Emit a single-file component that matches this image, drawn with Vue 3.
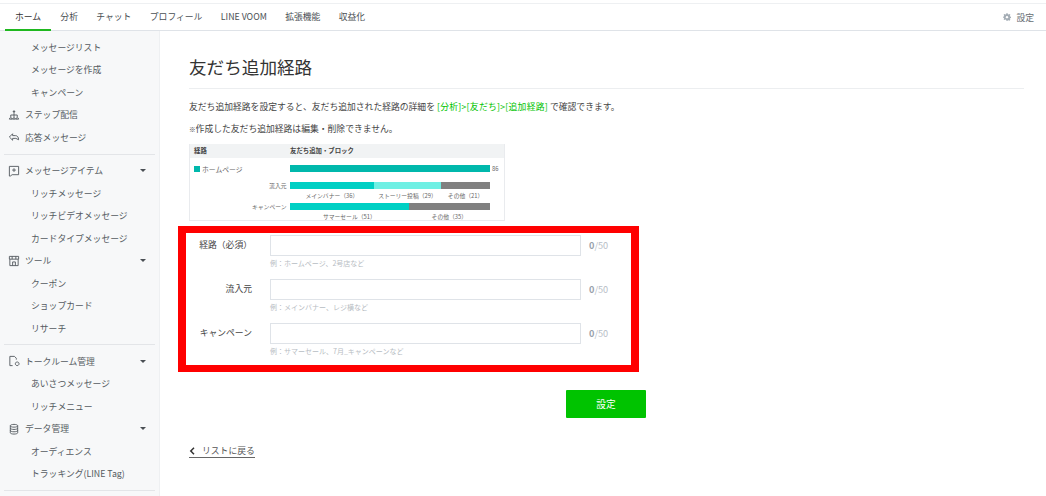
<template>
  <div class="page">
    <header class="topbar">
      <nav class="tabs">
        <a v-for="(tab, i) in tabs" :key="tab" class="tab" :class="{ active: i === 0 }">{{ tab }}</a>
      </nav>
      <a class="settings">
        <svg width="8" height="8" viewBox="0 0 24 24">
          <path fill="#a4adb5" d="M10 1h4l.7 3.200 2 .8 2.800-1.800 2.800 2.800L20.500 8.800l.8 2 3.200.7v4l-3.200.7-.8 2 1.800 2.800-2.800 2.800-2.800-1.800-2 .8L14 24h-4l-.7-3.200-2-.8-2.800 1.800-2.800-2.800 1.800-2.800-.8-2L-.5 15.500v-4l3.200-.7.8-2L1.700 6l2.800-2.800L7.300 5l2-.8z" transform="translate(0 -.5)" />
          <circle cx="12" cy="12.500" r="3.500" fill="#fff" />
        </svg>
        設定
      </a>
    </header>

    <div class="body">
      <aside class="sidebar">
        <section v-for="(group, g) in menu" :key="g" class="menu-group">
          <div v-for="item in group" :key="item.label" class="menu-item" :class="{ sub: !item.icon }">
            <svg v-if="item.icon" class="menu-icon" width="12" height="12" viewBox="0 0 13 13" fill="none" stroke="#555b61" stroke-width="1">
              <path :d="icons[item.icon]" />
            </svg>
            <span>{{ item.label }}</span>
            <i v-if="item.caret" class="caret"></i>
          </div>
        </section>
      </aside>

      <main class="content">
        <h1 class="title">友だち追加経路</h1>
        <p class="lead">
          友だち追加経路を設定すると、友だち追加された経路の詳細を
          <span class="green">[分析]&gt;[友だち]&gt;[追加経路]</span>
          で確認できます。
        </p>
        <p class="note"><span class="mark">※</span>作成した友だち追加経路は編集・削除できません。</p>

        <div class="chart">
          <div class="chart-head">
            <span class="chart-col">経路</span>
            <span>友だち追加・ブロック</span>
          </div>
          <div class="chart-main">
            <span class="chart-col route"><i class="swatch"></i>ホームページ</span>
            <div class="bar top"><i style="flex: 1"></i></div>
            <span class="total">86</span>
          </div>
          <div v-for="row in chartRows" :key="row.label" class="chart-row">
            <div class="bar-line">
              <span class="chart-col row-label">{{ row.label }}</span>
              <div class="bar">
                <i v-for="seg in row.segments" :key="seg.label" :style="{ flex: seg.value, background: seg.color }"></i>
              </div>
            </div>
            <div class="seg-labels">
              <span v-for="seg in row.segments" :key="seg.label" :style="{ flex: seg.value }">{{ seg.label }}（{{ seg.value }}）</span>
            </div>
          </div>
        </div>

        <div class="form-box">
          <div v-for="field in fields" :key="field.label" class="field">
            <label class="field-label">{{ field.label }}</label>
            <div class="field-main">
              <input class="input" type="text" />
              <small class="hint">{{ field.hint }}</small>
            </div>
            <span class="count"><b>0</b>/50</span>
          </div>
        </div>

        <div class="actions">
          <button class="submit">設定</button>
        </div>

        <a class="back">
          <svg width="7" height="8" viewBox="0 0 7 8" fill="none" stroke="#333" stroke-width="1.500">
            <path d="M5 .8 1.800 4 5 7.200" />
          </svg>
          リストに戻る
        </a>
      </main>
    </div>
  </div>
</template>

<script setup>
const tabs = ["ホーム", "分析", "チャット", "プロフィール", "LINE VOOM", "拡張機能", "収益化"];

const icons = {
  step: "M6.500 2v3M3 9V6.500h7V9M6.500 5v4M1.500 11a1.500 1.500 0 0 1 3 0zM5 11a1.500 1.500 0 0 1 3 0zM8.500 11a1.500 1.500 0 0 1 3 0zM5.500 3a1 1 0 0 1 2 0z",
  reply: "M5 3 1.500 6.500 5 10V8h3.500l3 1.500c0-3-1.500-4.500-3.500-4.500H5z",
  item: "M1.500 1.500h10v9h-7l-2 1.500h-1zM6.500 3.500v4M4.500 5.500h4",
  shop: "M1.500 1.500h10v3h-10zM2 4.500v7h9v-7M4.500 1.500v3M8.500 1.500v3M5 11.500v-4h3v4",
  room: "M2 1.500h5l2 2v1.500M2 1.500v10h3M10 7.500a2 2 0 1 1-.1 0M10 9.500h.1",
  data: "M2.500 3c0-2 8-2 8 0v7.500c0 2-8 2-8 0zM2.500 3c0 2 8 2 8 0M2.500 5.500c0 2 8 2 8 0M2.500 8c0 2 8 2 8 0",
};

const menu = [
  [
    { label: "メッセージリスト" },
    { label: "メッセージを作成" },
    { label: "キャンペーン" },
    { label: "ステップ配信", icon: "step" },
    { label: "応答メッセージ", icon: "reply" },
  ],
  [
    { label: "メッセージアイテム", icon: "item", caret: true },
    { label: "リッチメッセージ" },
    { label: "リッチビデオメッセージ" },
    { label: "カードタイプメッセージ" },
    { label: "ツール", icon: "shop", caret: true },
    { label: "クーポン" },
    { label: "ショップカード" },
    { label: "リサーチ" },
  ],
  [
    { label: "トークルーム管理", icon: "room", caret: true },
    { label: "あいさつメッセージ" },
    { label: "リッチメニュー" },
    { label: "データ管理", icon: "data", caret: true },
    { label: "オーディエンス" },
    { label: "トラッキング(LINE Tag)" },
  ],
];

const chartRows = [
  {
    label: "流入元",
    segments: [
      { label: "メインバナー", value: 36, color: "#00d0c4" },
      { label: "ストーリー投稿", value: 29, color: "#6ff0e4" },
      { label: "その他", value: 21, color: "#808080" },
    ],
  },
  {
    label: "キャンペーン",
    segments: [
      { label: "サマーセール", value: 51, color: "#00d0c4" },
      { label: "その他", value: 35, color: "#808080" },
    ],
  },
];

const fields = [
  { label: "経路（必須）", hint: "例：ホームページ、2号店など" },
  { label: "流入元", hint: "例：メインバナー、レジ横など" },
  { label: "キャンペーン", hint: "例：サマーセール、7月_キャンペーンなど" },
];
</script>

<style>
html,
body {
  margin: 0;
  background: #fff;
  overflow: hidden;
}
</style>

<style scoped>
.page {
  width: 1046px;
  height: 496px;
  overflow: hidden;
  font-family: "Noto Sans CJK JP", "Noto Sans", sans-serif;
  font-size: 8.8px;
  color: #4a4f54;
  display: flex;
  flex-direction: column;
}

.topbar {
  height: 26px;
  margin-top: 3px;
  flex: none;
  border-top: 1px solid #eef0f2;
  border-bottom: 1px solid #dfe3e8;
  display: flex;
  justify-content: space-between;
  align-items: stretch;
  padding: 0 12px 0 5px;
}

.tabs {
  display: flex;
}

.tab {
  display: flex;
  align-items: center;
  padding: 0 9.200px;
  margin-bottom: -1px;
  border-bottom: 2px solid transparent;
  white-space: nowrap;
}

.tab.active {
  border-bottom-color: #1fb81f;
  padding: 0 10px;
  color: #333;
}

.settings {
  display: flex;
  align-items: center;
  gap: 5px;
  color: #666d73;
}

.body {
  flex: 1;
  display: flex;
  min-height: 0;
}

.sidebar {
  width: 160px;
  flex: none;
  box-sizing: border-box;
  background: #f7f8f9;
  border-right: 1px solid #eef0f2;
  padding: 5px 4px 0;
}

.menu-group {
  padding-bottom: 5px;
  margin-bottom: 4.750px;
  border-bottom: 1px solid #e3e5e8;
}

.menu-item {
  height: 22.500px;
  display: flex;
  align-items: center;
  padding-left: 4px;
  white-space: nowrap;
  color: #555b61;
}

.menu-item.sub {
  padding-left: 27px;
}

.menu-icon {
  margin-right: 5px;
  flex: none;
}

.caret {
  margin-left: auto;
  margin-right: 9px;
  border: 3px solid transparent;
  border-top: 3.500px solid #4a4f54;
  border-bottom: 0;
}

.content {
  flex: 1;
  padding: 0 22px 0 29px;
}

.title {
  margin: 0;
  height: 58px;
  box-sizing: border-box;
  padding-top: 22px;
  font-size: 17.600px;
  line-height: 28px;
  font-weight: 400;
  color: #333;
  border-bottom: 1px solid #eceef0;
}

.lead,
.note {
  margin: 0;
  line-height: 13px;
  color: #444;
}

.lead {
  margin-top: 11px;
}

.note {
  margin-top: 8.500px;
}

.mark {
  font-size: 6.600px;
}

.green {
  color: #00c300;
  letter-spacing: 0.25px;
}

.chart {
  margin-top: 8px;
  width: 316px;
  height: 77px;
  box-sizing: border-box;
  border: 1px solid #e9ebee;
  border-top: 0;
  font-size: 5.800px;
  color: #666;
}

.chart-head {
  display: flex;
  align-items: center;
  height: 14px;
  background: #f1f3f4;
  font-weight: 700;
  font-size: 6.400px;
  color: #444;
}

.chart-col {
  width: 100px;
  flex: none;
  box-sizing: border-box;
  padding-left: 4px;
}

.chart-main {
  display: flex;
  align-items: center;
  height: 7px;
  margin-top: 7.500px;
}

.route {
  display: flex;
  align-items: center;
  gap: 2px;
  font-size: 6.800px;
}

.swatch {
  width: 6px;
  height: 6px;
  background: #00b8ac;
}

.bar {
  width: 200px;
  height: 7px;
  display: flex;
}

.bar.top i {
  background: #00b8ac;
}

.total {
  margin-left: 2px;
}

.chart-row {
  margin-top: 10px;
}

.chart-row + .chart-row {
  margin-top: 3.500px;
}

.bar-line {
  display: flex;
  align-items: center;
  height: 7px;
}

.row-label {
  text-align: right;
  padding-right: 3.500px;
}

.seg-labels {
  display: flex;
  width: 200px;
  margin: 1.500px 0 0 100px;
  height: 9px;
  line-height: 9px;
  text-align: center;
  white-space: nowrap;
}

.form-box {
  margin: 5px 0 0 -11px;
  width: 461px;
  height: 146px;
  box-sizing: border-box;
  border: 7px solid #ff0000;
  border-width: 7px 8px;
  padding-top: 2px;
}

.field {
  display: flex;
  align-items: flex-start;
  height: 44px;
}

.field-label {
  width: 66px;
  flex: none;
  text-align: right;
  line-height: 20px;
  color: #444;
  white-space: nowrap;
}

.field-main {
  width: 311px;
  margin-left: 18px;
  flex: none;
  display: flex;
  flex-direction: column;
}

.input {
  height: 21px;
  box-sizing: border-box;
  border: 1px solid #dfe3e8;
  padding: 0 6px;
  background: #fff;
  outline: none;
}

.hint {
  margin-top: 2.500px;
  font-size: 7px;
  line-height: 10px;
  color: #b7bdc3;
}

.count {
  margin-left: 8px;
  line-height: 21px;
  color: #b7bec6;
  font-size: 9.200px;
}

.count b {
  color: #98a1ab;
  font-weight: 700;
}

.actions {
  width: 457px;
  margin-top: 18px;
  display: flex;
  justify-content: flex-end;
}

.submit {
  width: 80px;
  height: 28px;
  border: none;
  border-radius: 1px;
  background: #00c300;
  color: #fff;
  font-family: inherit;
  font-size: 9.700px;
  padding: 0;
}

.back {
  display: inline-flex;
  align-items: center;
  gap: 6px;
  margin-top: 27px;
  line-height: 12px;
  color: #555;
  border-bottom: 1px solid #666;
}
</style>
